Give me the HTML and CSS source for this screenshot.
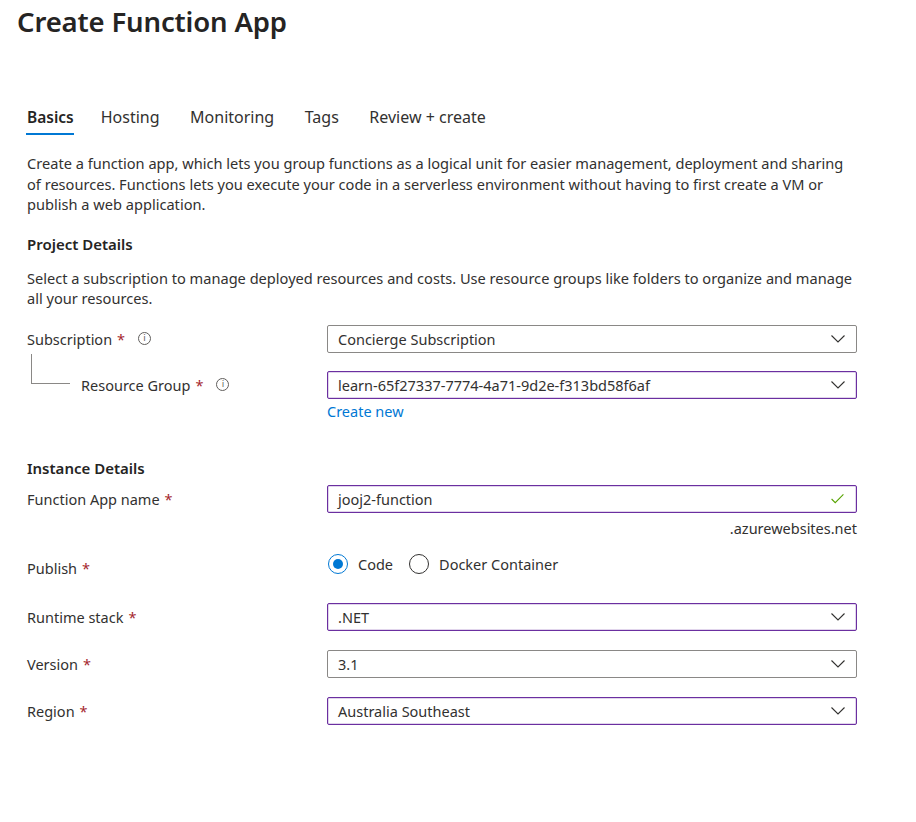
FILE: index.html
```html
<!DOCTYPE html>
<html>
<head>
<meta charset="utf-8">
<link rel="stylesheet" href="styles.css">
</head>
<body>
<div class="page">
  <h1 class="title">Create Function App</h1>
  <nav class="tabs">
    <span class="tab active">Basics</span>
    <span class="tab">Hosting</span>
    <span class="tab">Monitoring</span>
    <span class="tab">Tags</span>
    <span class="tab">Review + create</span>
  </nav>
  <div class="content">
    <p class="desc">Create a function app, which lets you group functions as a logical unit for easier management, deployment and sharing of resources. Functions lets you execute your code in a serverless environment without having to first create a VM or publish a web application.</p>
    <h2 class="section">Project Details</h2>
    <p class="desc desc2">Select a subscription to manage deployed resources and costs. Use resource groups like folders to organize and manage all your resources.</p>

    <div class="row row-sub">
      <div class="label">Subscription <span class="req">*</span><span class="info">i</span></div>
      <div class="select"><span>Concierge Subscription</span><svg class="chev" viewBox="0 0 14 8"><path d="M0.5 0.5 L7 7 L13.5 0.5" /></svg></div>
    </div>
    <div class="row row-rg">
      <div class="label nested"><span class="tree"></span>Resource Group <span class="req">*</span><span class="info">i</span></div>
      <div class="control">
        <div class="select dirty"><span>learn-65f27337-7774-4a71-9d2e-f313bd58f6af</span><svg class="chev" viewBox="0 0 14 8"><path d="M0.5 0.5 L7 7 L13.5 0.5" /></svg></div>
        <a class="link">Create new</a>
      </div>
    </div>

    <h2 class="section section2">Instance Details</h2>
    <div class="row row-name">
      <div class="label">Function App name <span class="req">*</span></div>
      <div class="control">
        <div class="select dirty"><span>jooj2-function</span><svg class="check" viewBox="0 0 14 11"><path d="M0.5 5.5 L4.5 9.5 L13.5 0.5" /></svg></div>
        <div class="suffix">.azurewebsites.net</div>
      </div>
    </div>
    <div class="row row-publish">
      <div class="label">Publish <span class="req">*</span></div>
      <div class="radios">
        <span class="radio checked"></span><span class="rlabel first">Code</span>
        <span class="radio"></span><span class="rlabel">Docker Container</span>
      </div>
    </div>
    <div class="row row-runtime">
      <div class="label">Runtime stack <span class="req">*</span></div>
      <div class="select dirty"><span>.NET</span><svg class="chev" viewBox="0 0 14 8"><path d="M0.5 0.5 L7 7 L13.5 0.5" /></svg></div>
    </div>
    <div class="row row-version">
      <div class="label">Version <span class="req">*</span></div>
      <div class="select"><span>3.1</span><svg class="chev" viewBox="0 0 14 8"><path d="M0.5 0.5 L7 7 L13.5 0.5" /></svg></div>
    </div>
    <div class="row row-region">
      <div class="label">Region <span class="req">*</span></div>
      <div class="select dirty"><span>Australia Southeast</span><svg class="chev" viewBox="0 0 14 8"><path d="M0.5 0.5 L7 7 L13.5 0.5" /></svg></div>
    </div>
  </div>
</div>
</body>
</html>
```

FILE: styles.css
```css
html, body {
  margin: 0;
  padding: 0;
  background: #ffffff;
}
body {
  font-family: "Noto Sans", "Open Sans", sans-serif;
  color: #323130;
  font-size: 14px;
}
.page {
  width: 916px;
  height: 822px;
}
.title {
  margin: 0;
  padding: 4px 0 0 17px;
  font-size: 27.5px;
  line-height: 36px;
  font-weight: 600;
  color: #252423;
  letter-spacing: -0.15px;
}
.tabs {
  display: flex;
  margin: 67px 0 0 27px;
}
.tab {
  line-height: 20px;
  padding-bottom: 6px;
  font-size: 16px;
  margin-right: 30.5px;
  position: relative;
}
.tab.active {
  font-weight: 600;
  font-size: 15.5px;
  margin-right: 27px;
  color: #252423;
}
.tab.active::after {
  content: "";
  position: absolute;
  left: -1px;
  right: 0;
  bottom: -2px;
  height: 2px;
  background: #0078d4;
}
.content {
  padding: 0 59px 0 27px;
}
.desc {
  margin: 20px 0 0 0;
  line-height: 20.5px;
  font-size: 14.6px;
}
.desc2 {
  margin-top: 14px;
}
.section {
  margin: 19px 0 0 0;
  font-size: 15px;
  line-height: 20px;
  font-weight: 600;
  color: #252423;
}
.section2 {
  margin-top: 37px;
}
.row {
  display: grid;
  grid-template-columns: 300px 530px;
  align-items: start;
}
.label {
  display: flex;
  align-items: center;
  height: 28px;
  line-height: 20px;
  font-size: 14.5px;
  position: relative;
}
.label.nested {
  padding-left: 54px;
}
.tree {
  position: absolute;
  left: 4px;
  top: -17px;
  width: 38px;
  height: 29px;
  border-left: 1px solid #8a8886;
  border-bottom: 1px solid #8a8886;
}
.req {
  color: #a4262c;
  margin-left: 5px;
}
.info {
  display: inline-flex;
  align-items: center;
  justify-content: center;
  width: 11px;
  height: 11px;
  border: 1px solid #605e5c;
  border-radius: 50%;
  font-size: 9px;
  line-height: 9px;
  color: #605e5c;
  margin-left: 13px;
  font-family: "DejaVu Sans", sans-serif;
}
.select {
  box-sizing: border-box;
  height: 28px;
  border: 1px solid #8a8886;
  border-radius: 2px;
  display: flex;
  align-items: center;
  justify-content: space-between;
  padding: 0 11px 0 10px;
  font-size: 14.5px;
  color: #323130;
}
.select.dirty {
  border-color: #6b2fa0;
  box-shadow: inset 0 0 0 0.5px rgba(107, 47, 160, 0.4);
}
.chev {
  width: 14px;
  height: 8px;
  fill: none;
  stroke: #323130;
  stroke-width: 1.1;
}
.check {
  width: 13px;
  height: 10px;
  fill: none;
  stroke: #57a300;
  stroke-width: 1.2;
  margin-right: 1px;
}
.control {
  display: flex;
  flex-direction: column;
}
.link {
  color: #0078d4;
  line-height: 20px;
  font-size: 14.5px;
  margin-top: 2px;
  cursor: pointer;
}
.suffix {
  text-align: right;
  line-height: 20px;
  margin-top: 5px;
  font-size: 14.5px;
}
.row-sub { margin-top: 16px; }
.row-rg { margin-top: 18px; }
.row-name { margin-top: 7px; }
.row-publish { margin-top: 12px; }
.row-publish .label { height: 28px; padding-top: 8px; box-sizing: border-box; }
.radios {
  display: flex;
  align-items: center;
  height: 20px;
  margin-top: 4px;
}
.radio {
  box-sizing: border-box;
  width: 20px;
  height: 20px;
  border: 1px solid #323130;
  border-radius: 50%;
  position: relative;
  margin-left: 1px;
}
.radio.checked {
  border-color: #0078d4;
}
.radio.checked::after {
  content: "";
  position: absolute;
  left: 4px;
  top: 4px;
  width: 10px;
  height: 10px;
  border-radius: 50%;
  background: #0078d4;
}
.rlabel {
  margin-left: 10px;
  margin-right: 10px;
  font-size: 14.5px;
  line-height: 20px;
}
.rlabel.first {
  margin-right: 15px;
}
.row-runtime { margin-top: 25px; }
.row-version { margin-top: 19px; }
.row-region { margin-top: 19px; }
```
